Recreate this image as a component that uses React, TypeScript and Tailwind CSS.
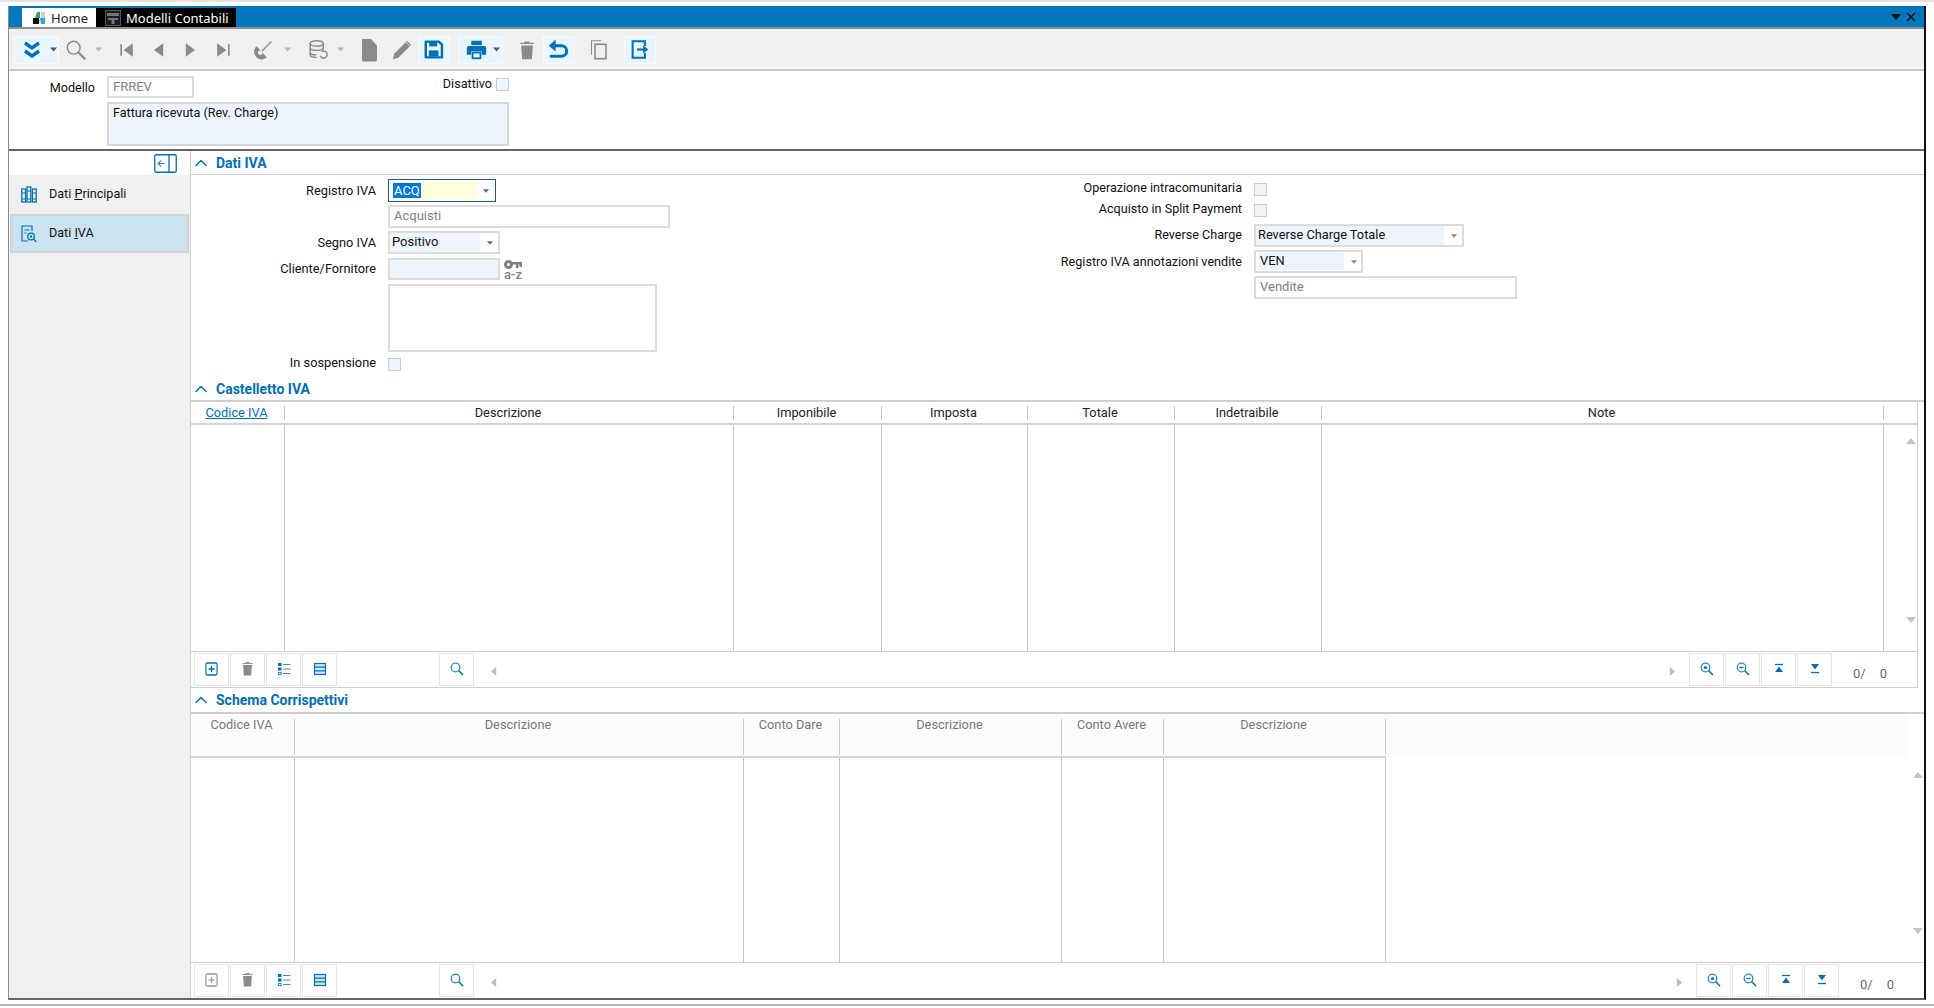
import React from "react";
import { ChevronUp } from "lucide-react";

const BLUE = "#0070b8";

function Tri({ dir = "down", size = 6, color = "#666" }: { dir?: "down" | "up" | "left" | "right"; size?: number; color?: string }) {
  const pts = { down: "0,2 10,2 5,8", up: "0,8 10,8 5,2", left: "8,0 8,10 2,5", right: "2,0 2,10 8,5" }[dir];
  return (
    <svg width={size} height={size} viewBox="0 0 10 10" className="block shrink-0">
      <polygon points={pts} fill={color} />
    </svg>
  );
}

const G = "#8a8a8a";

function Ico({ children, w = 24, vb = "0 0 24 24" }: { children: React.ReactNode; w?: number; vb?: string }) {
  return (
    <svg width={w} height={w} viewBox={vb} className="block shrink-0">
      {children}
    </svg>
  );
}

const Icons = {
  chevrons: () => (
    <Ico>
      <path d="M5 5l7 5 7-5M5 13l7 5 7-5" fill="none" stroke={BLUE} strokeWidth="3.4" />
    </Ico>
  ),
  search: ({ c = G }: { c?: string }) => (
    <Ico w={22}>
      <circle cx="9.500" cy="9.500" r="7" fill="none" stroke={c} strokeWidth="1.6" />
      <path d="M14.500 14.500L22 22" stroke={c} strokeWidth="2.4" />
    </Ico>
  ),
  first: () => (
    <Ico w={20}>
      <path d="M5 5v14" stroke={G} strokeWidth="2" />
      <polygon points="19,4 19,20 8,12" fill={G} />
    </Ico>
  ),
  prev: () => (
    <Ico w={20}>
      <polygon points="17,4 17,20 6,12" fill={G} />
    </Ico>
  ),
  next: () => (
    <Ico w={20}>
      <polygon points="7,4 7,20 18,12" fill={G} />
    </Ico>
  ),
  last: () => (
    <Ico w={20}>
      <path d="M19 5v14" stroke={G} strokeWidth="2" />
      <polygon points="5,4 5,20 16,12" fill={G} />
    </Ico>
  ),
  sat: () => (
    <Ico w={22}>
      <path d="M5 8c-4 4-3 9 0 12s8 3 11 0z" fill={G} />
      <circle cx="9" cy="15" r="2.500" fill="#f0f0f0" />
      <path d="M11 13l5-5M18 6l3-3" stroke={G} strokeWidth="1.500" />
      <circle cx="17" cy="7" r="1.100" fill={G} />
    </Ico>
  ),
  db: () => (
    <Ico w={21}>
      <ellipse cx="10" cy="5" rx="7.500" ry="3" fill="none" stroke={G} strokeWidth="1.700" />
      <path d="M2.500 5v13c0 2 4 3 7.500 3M17.500 5v7M2.500 10c0 2 4 3 7.500 3s7.500-1 7.500-3M2.500 15c0 2 4 3 7 3" fill="none" stroke={G} strokeWidth="1.700" />
      <path d="M14 19a4 4 0 1 0 1.500-4.500" fill="none" stroke={G} strokeWidth="1.700" />
    </Ico>
  ),
  doc: () => (
    <Ico>
      <path d="M5 1h9l6 6.500V22a1.500 1.500 0 0 1-1.500 1.500h-12A1.500 1.500 0 0 1 5 22z" fill={G} />
    </Ico>
  ),
  pencil: () => (
    <Ico w={22}>
      <path d="M2 22l1.500-6L16 3.500l4.500 4.500L8 20.500z" fill={G} />
      <path d="M17.500 2l4.500 4.500-1 1L16.500 3z" fill={G} />
    </Ico>
  ),
  save: () => (
    <Ico w={21} vb="1 0 24 24">
      <path d="M3 3h15l3.500 3.500V21H3z" fill="none" stroke={BLUE} strokeWidth="2.800" strokeLinejoin="round" />
      <rect x="7" y="3" width="9" height="5.500" fill={BLUE} />
      <rect x="6.500" y="13" width="11" height="7" fill={BLUE} />
    </Ico>
  ),
  print: () => (
    <Ico w={21}>
      <rect x="6" y="2" width="12" height="5" fill={BLUE} />
      <path d="M3 8h18a2 2 0 0 1 2 2v8h-5v-4H6v4H1v-8a2 2 0 0 1 2-2z" fill={BLUE} />
      <rect x="7.500" y="15.500" width="9" height="6.500" fill="none" stroke={BLUE} strokeWidth="2" />
    </Ico>
  ),
  trash: ({ s = 20 }: { s?: number }) => (
    <Ico w={s}>
      <path d="M5 6.500h14L17.800 23H6.200z" fill={G} />
      <path d="M4 4h16M9 2.500h6" stroke={G} strokeWidth="1.500" />
    </Ico>
  ),
  undo: () => (
    <Ico w={23} vb="1 0 24 24">
      <path d="M3 8h12a5.500 5.500 0 0 1 0 11H3" fill="none" stroke={BLUE} strokeWidth="3.200" />
      <polygon points="9,1.500 9,14 2,8" fill={BLUE} />
    </Ico>
  ),
  copy: () => (
    <Ico w={21}>
      <path d="M4 18V2h11" fill="none" stroke={G} strokeWidth="1.200" />
      <rect x="8" y="6" width="12.500" height="16.500" fill="none" stroke={G} strokeWidth="1.800" />
    </Ico>
  ),
  exit: () => (
    <Ico w={21} vb="2 0 24 24">
      <path d="M19 8V2.500H5v19h14V16" fill="none" stroke={BLUE} strokeWidth="2.400" />
      <path d="M10 12h8" stroke={BLUE} strokeWidth="2.400" />
      <polygon points="17,7.500 23,12 17,16.500" fill={BLUE} />
    </Ico>
  ),
  key: () => (
    <svg width="18" height="10" viewBox="0 0 18 10" className="block shrink-0">
      <circle cx="4.500" cy="4.500" r="3" fill="none" stroke="#808080" strokeWidth="3" />
      <path d="M8 3.200h10M13.200 3v5M16.800 3v4" fill="none" stroke="#808080" strokeWidth="2.600" />
    </svg>
  ),
  plusBox: ({ c = BLUE }: { c?: string }) => (
    <svg width="13" height="14" viewBox="0 0 14 14" className="block" preserveAspectRatio="none">
      <rect x="1" y="1" width="12" height="12" rx="1.500" fill="none" stroke={c} strokeWidth="1.300" />
      <path d="M7 3.800v6.400M3.800 7h6.400" stroke={c === BLUE ? BLUE : "#aaa"} strokeWidth="1.500" />
    </svg>
  ),
  list: () => (
    <svg width="14" height="14" viewBox="0 0 14 14" className="block">
      <rect x="1" y="1" width="3.500" height="3" fill={BLUE} />
      <rect x="1" y="5.500" width="3.500" height="3" fill={BLUE} />
      <rect x="1.300" y="10.300" width="2.800" height="2.400" fill="none" stroke={BLUE} strokeWidth="0.800" />
      <path d="M6 2.500h7.500M6 7h7.500M6 11.500h7.500" stroke="#3b8fc7" strokeWidth="1.200" />
    </svg>
  ),
  rows: () => (
    <svg width="14" height="14" viewBox="0 0 14 14" className="block">
      <rect x="1.500" y="1.500" width="11" height="11" fill="#cfe4f3" stroke={BLUE} strokeWidth="1.200" />
      <path d="M1.500 5.200h11M1.500 8.800h11" stroke={BLUE} strokeWidth="1.200" />
    </svg>
  ),
  searchSm: () => (
    <svg width="14" height="14" viewBox="0 0 14 14" className="block">
      <circle cx="5.500" cy="5.500" r="4.300" fill="none" stroke="#2b88c8" strokeWidth="1.300" />
      <path d="M8.800 8.800L13 13" stroke={BLUE} strokeWidth="1.600" />
    </svg>
  ),
  zoomIn: () => (
    <svg width="14" height="14" viewBox="0 0 14 14" className="block">
      <circle cx="5.500" cy="5.500" r="4.300" fill="none" stroke="#2b88c8" strokeWidth="1.300" />
      <circle cx="5.500" cy="5.500" r="1.600" fill={BLUE} />
      <path d="M8.800 8.800L13 13" stroke={BLUE} strokeWidth="1.600" />
    </svg>
  ),
  zoomOut: () => (
    <svg width="14" height="14" viewBox="0 0 14 14" className="block">
      <circle cx="5.500" cy="5.500" r="4.300" fill="none" stroke="#2b88c8" strokeWidth="1.300" />
      <path d="M3.500 5.500h4" stroke={BLUE} strokeWidth="1.300" />
      <path d="M8.800 8.800L13 13" stroke={BLUE} strokeWidth="1.600" />
    </svg>
  ),
  top: () => (
    <svg width="14" height="14" viewBox="0 0 14 14" className="block">
      <path d="M3 2.500h8" stroke={BLUE} strokeWidth="1.300" />
      <polygon points="7,4.500 11,10 3,10" fill={BLUE} />
    </svg>
  ),
  bottom: () => (
    <svg width="14" height="14" viewBox="0 0 14 14" className="block">
      <polygon points="3,2 11,2 7,7.500" fill={BLUE} />
      <path d="M3 10.500h8" stroke={BLUE} strokeWidth="1.300" />
    </svg>
  ),
};

function Slot({ className = "", children }: { className?: string; children: React.ReactNode }) {
  return <div className={`flex items-center justify-center shrink-0 ${className}`}>{children}</div>;
}

function ActiveBtn({ className = "", children }: { className?: string; children: React.ReactNode }) {
  return <div className={`flex items-center justify-center shrink-0 h-[28px] bg-[#eaf6fd] border border-[#f7fbfe] ${className}`}>{children}</div>;
}

function MainToolbar() {
  return (
    <div className="h-[42px] bg-[#f0f0f0] border-t-2 border-[#8f8f8f] border-b-2 border-b-[#f8f8f8] flex items-center pl-[5px] pt-[3px] shrink-0">
      <ActiveBtn className="w-[45px] gap-[6px] pl-[4px]">
        <Icons.chevrons />
        <Tri color="#555" size={7} />
      </ActiveBtn>
      <Slot className="w-[24px] ml-[5px]"><Icons.search /></Slot>
      <Slot className="w-[12px] ml-[4px]"><Tri color="#b5b5b5" size={7} /></Slot>
      <Slot className="w-[24px] ml-[11px]"><Icons.first /></Slot>
      <Slot className="w-[24px] ml-[8px]"><Icons.prev /></Slot>
      <Slot className="w-[24px] ml-[7px]"><Icons.next /></Slot>
      <Slot className="w-[24px] ml-[9px]"><Icons.last /></Slot>
      <Slot className="w-[24px] ml-[16px]"><Icons.sat /></Slot>
      <Slot className="w-[12px] ml-[6px]"><Tri color="#b5b5b5" size={7} /></Slot>
      <Slot className="w-[24px] ml-[13px]"><Icons.db /></Slot>
      <Slot className="w-[12px] ml-[4px]"><Tri color="#b5b5b5" size={7} /></Slot>
      <Slot className="w-[24px] ml-[11px]"><Icons.doc /></Slot>
      <Slot className="w-[24px] ml-[9px]"><Icons.pencil /></Slot>
      <ActiveBtn className="w-[32px] ml-[4px]"><Icons.save /></ActiveBtn>
      <ActiveBtn className="w-[45px] ml-[8px] gap-[6px] pl-[4px]">
        <Icons.print />
        <Tri color="#555" size={7} />
      </ActiveBtn>
      <Slot className="w-[24px] ml-[12px]"><Icons.trash /></Slot>
      <ActiveBtn className="w-[32px] ml-[4px]"><Icons.undo /></ActiveBtn>
      <Slot className="w-[24px] ml-[11px]"><Icons.copy /></Slot>
      <ActiveBtn className="w-[32px] ml-[14px]"><Icons.exit /></ActiveBtn>
    </div>
  );
}

function Check({ className = "" }: { className?: string }) {
  return <div className={`w-[13px] h-[13px] bg-[#edf4fc] border border-[#cdcdcd] shrink-0 ${className}`} />;
}

function Field({ className = "", children }: { className?: string; children?: React.ReactNode }) {
  return <div className={`border-2 border-[#dcdcdc] bg-white text-[#808080] text-[13px] leading-[18px] pl-[4px] pb-[1px] shrink-0 flex items-center ${className}`}>{children}</div>;
}

function SectionHeader({ title, className = "" }: { title: string; className?: string }) {
  return (
    <div className={`flex items-center shrink-0 ${className}`}>
      <ChevronUp size={20} color={BLUE} strokeWidth={1.7} />
      <span className="ml-[5px] text-[14px] font-bold text-[#0070b8] leading-none">{title}</span>
    </div>
  );
}

function TBtn({ className = "", children }: { className?: string; children: React.ReactNode }) {
  return <div className={`w-[35px] h-[33px] border border-[#e6e6e6] flex items-center justify-center shrink-0 pb-[2px] ${className}`}>{children}</div>;
}

function GridToolbar({ grey = false }: { grey?: boolean }) {
  return (
    <div className="h-[35px] flex items-center pl-[3px] shrink-0">
      <TBtn><Icons.plusBox c={grey ? "#999" : BLUE} /></TBtn>
      <TBtn className="ml-[1px]"><Icons.trash s={15} /></TBtn>
      <TBtn className="ml-[1px]"><Icons.list /></TBtn>
      <TBtn className="ml-[1px]"><Icons.rows /></TBtn>
      <TBtn className="ml-[102px]"><Icons.searchSm /></TBtn>
      <div className="ml-[15px] mt-[3px]"><Tri dir="left" size={9} color="#bdbdbd" /></div>
      <div className="ml-auto mt-[3px] mr-[12px]"><Tri dir="right" size={9} color="#bdbdbd" /></div>
      <TBtn><Icons.zoomIn /></TBtn>
      <TBtn className="ml-[1px]"><Icons.zoomOut /></TBtn>
      <TBtn className="ml-[1px]"><Icons.top /></TBtn>
      <TBtn className="ml-[1px]"><Icons.bottom /></TBtn>
      <div className="w-[85px] pl-[21px] pt-[9px] text-[13px] text-[#5f6b7a] whitespace-nowrap shrink-0">
        0/<span className="ml-[14px]">0</span>
      </div>
    </div>
  );
}

function Scroll({ className = "" }: { className?: string }) {
  return (
    <div className={`flex flex-col justify-between items-end ${className}`}>
      <Tri dir="up" size={10} color="#c4c4c4" />
      <Tri dir="down" size={10} color="#c4c4c4" />
    </div>
  );
}

function Label({ className = "", children }: { className?: string; children: React.ReactNode }) {
  return <div className={`text-right text-[12.6px] leading-[18px] text-[#111] shrink-0 ${className}`}>{children}</div>;
}

function LeftLabel({ className = "", children }: { className?: string; children: React.ReactNode }) {
  return <div className={`w-[185px] text-right text-[12.8px] leading-[18px] text-[#111] shrink-0 ${className}`}>{children}</div>;
}

const topCols = [
  { w: "w-[94px]", t: "Codice IVA" },
  { w: "w-[449px]", t: "Descrizione" },
  { w: "w-[148px]", t: "Imponibile" },
  { w: "w-[146px]", t: "Imposta" },
  { w: "w-[147px]", t: "Totale" },
  { w: "w-[147px]", t: "Indetraibile" },
  { w: "w-[562px]", t: "Note" },
];

const botCols = [
  { w: "w-[104px]", t: "Codice IVA" },
  { w: "w-[449px]", t: "Descrizione" },
  { w: "w-[96px]", t: "Conto Dare" },
  { w: "w-[222px]", t: "Descrizione" },
  { w: "w-[102px]", t: "Conto Avere" },
  { w: "w-[222px]", t: "Descrizione" },
];

export default function App() {
  return (
    <div className="w-[1934px] h-[1008px] bg-white overflow-hidden font-['Roboto',sans-serif]">
      <div className="h-[1006px] border-t-2 border-b-2 border-t-[#e2e2e2] border-b-[#b5b5b5] pt-[4px] pl-[8px] pr-[8px]">
        <div className="w-[1918px] h-[994px] border-r-2 border-r-[#111] border-l border-l-[#8a8a8a] border-b-2 border-b-[#666] flex flex-col">
          {/* tab bar */}
          <div className="h-[21px] bg-[#0277bd] flex items-end pl-[13px] shrink-0 font-['Noto_Sans',sans-serif] text-[13px]">
            <div className="h-[19px] w-[74px] bg-white flex items-center pl-[10px] gap-[5px] pt-[1px] text-[#222]">
              <svg width="14" height="14" viewBox="0 0 14 14" className="block shrink-0">
                <polygon points="5,1 8,1 8,7 3,7" fill="#3aa35c" />
                <polygon points="9,1 13,1 13,7 9,7" fill="#c9ced3" />
                <rect x="1" y="7" width="6" height="6" fill="#111" />
                <polygon points="8,7 13,7 13,13 9,13" fill="#2ba6e0" />
              </svg>
              <span className="leading-none">Home</span>
            </div>
            <div className="h-[19px] w-[140px] bg-black flex items-center pl-[9px] gap-[5px] pt-[1px] text-white">
              <svg width="16" height="16" viewBox="0 0 16 16" className="block shrink-0">
                <rect x="0.500" y="0.500" width="15" height="15" fill="#1c1c1c" stroke="#555" />
                <rect x="2" y="3" width="12" height="3" fill="#777" />
                <rect x="3" y="8" width="10" height="2" fill="#777" />
                <rect x="6.500" y="8" width="3" height="6" fill="#777" />
              </svg>
              <span className="leading-none">Modelli Contabili</span>
            </div>
            <div className="ml-auto self-center flex items-center gap-[5px] pr-[8px]">
              <Tri size={10} color="#111" />
              <svg width="10" height="10" viewBox="0 0 10 10" className="block">
                <path d="M1 1l8 8M9 1l-8 8" stroke="#111" strokeWidth="1.500" />
              </svg>
            </div>
          </div>
          <MainToolbar />
          {/* header form */}
          <div className="h-[80px] border-t-2 border-[#c8c8c8] flex shrink-0">
            <Label className="w-[86px] mt-[8px]">Modello</Label>
            <div className="w-[402px] ml-[12px] shrink-0 flex flex-col pt-[5px]">
              <div className="flex items-start justify-between">
                <Field className="w-[87px] h-[22px]">FRREV</Field>
                <div className="flex items-center gap-[4px] mt-[-1px]">
                  <span className="text-[12.6px] leading-[18px] text-[#111]">Disattivo</span>
                  <Check />
                </div>
              </div>
              <div className="w-[402px] h-[44px] mt-[4px] border-2 border-[#d6d6d6] bg-[#edf4fc] text-[12.6px] leading-[18px] text-[#111] pl-[4px]">Fattura ricevuta (Rev. Charge)</div>
            </div>
          </div>
          {/* body */}
          <div className="flex-1 min-h-0 flex border-t-2 border-t-[#666]">
            <div className="w-[181px] shrink-0 flex flex-col">
              <div className="h-[24px] flex items-center justify-end pr-[13px] shrink-0">
                <svg width="23" height="19" viewBox="0 0 23 19" className="block">
                  <rect x="0.750" y="0.750" width="21.500" height="17.500" rx="1.500" fill="none" stroke={BLUE} strokeWidth="1.300" />
                  <path d="M15 1v17" stroke={BLUE} strokeWidth="1.300" />
                  <path d="M11 9.500H4M7 6.500l-3 3 3 3" fill="none" stroke="#3b8fc7" strokeWidth="1.100" />
                </svg>
              </div>
              <div className="flex-1 bg-[#f0f0f0] flex flex-col text-[12.6px] text-[#111]">
                <div className="h-[39px] flex items-center pl-[12px] gap-[12px] shrink-0">
                  <svg width="16" height="17" viewBox="0 0 16 17" className="block">
                    <g fill="none" stroke={BLUE} strokeWidth="1.300">
                      <rect x="0.800" y="3" width="3.800" height="13" />
                      <rect x="6" y="1" width="3.800" height="15" />
                      <rect x="11.400" y="3" width="3.800" height="13" />
                    </g>
                    <path d="M1 7h3M1 13h3M6 5h4M6 13h4M11 7h4M11 13h4" stroke={BLUE} strokeWidth="1.200" />
                  </svg>
                  <span>Dati <span className="underline">P</span>rincipali</span>
                </div>
                <div className="h-[39px] mx-[1px] bg-[#cbe3f1] border-2 border-[#d4d4d4] flex items-center pl-[9px] gap-[12px] shrink-0">
                  <svg width="16" height="18" viewBox="0 0 16 18" className="block">
                    <path d="M11 6V1H1v15h6" fill="none" stroke={BLUE} strokeWidth="1.200" />
                    <path d="M3.500 5h5M3.500 8h2" stroke={BLUE} strokeWidth="1" />
                    <circle cx="10" cy="11.500" r="3.300" fill="none" stroke={BLUE} strokeWidth="1.300" />
                    <circle cx="10" cy="11.500" r="1.200" fill={BLUE} />
                    <path d="M12.500 14l3 3" stroke={BLUE} strokeWidth="1.300" />
                  </svg>
                  <span>Dati <span className="underline">I</span>VA</span>
                </div>
              </div>
            </div>
            <div className="flex-1 min-w-0 flex flex-col border-l border-l-[#cfcfcf]">
              <SectionHeader title="Dati IVA" className="h-[24px] border-b border-[#cfcfcf]" />
              {/* form */}
              <div className="h-[202px] flex shrink-0">
                <div className="w-[809px] shrink-0 flex flex-col pt-[4px]">
                  <div className="flex h-[23px] items-center">
                    <LeftLabel>Registro IVA</LeftLabel>
                    <div className="ml-[12px] w-[108px] h-[23px] border-[1.5px] border-[#1f5a96] flex items-center pl-[4px]">
                      <div className="w-[84px] h-[19px] bg-[#ffffe0] flex items-center">
                        <span className="bg-[#0078d7] text-white text-[13px] leading-[15px] px-[1px]">ACQ</span>
                      </div>
                      <div className="ml-[6px]"><Tri /></div>
                    </div>
                  </div>
                  <div className="flex mt-[3px]">
                    <Field className="ml-[197px] w-[282px] h-[23px]">Acquisti</Field>
                  </div>
                  <div className="flex h-[23px] items-center mt-[3px]">
                    <LeftLabel>Segno IVA</LeftLabel>
                    <div className="ml-[12px] w-[112px] h-[23px] border-2 border-[#dcdcdc] flex items-center">
                      <div className="w-[90px] h-full bg-[#edf4fc] flex items-center pl-[2px] pb-[1px] text-[13px] text-[#111]">Positivo</div>
                      <div className="ml-[7px]"><Tri /></div>
                    </div>
                  </div>
                  <div className="flex h-[22px] items-center mt-[4px]">
                    <LeftLabel>Cliente/Fornitore</LeftLabel>
                    <div className="ml-[12px] w-[112px] h-[22px] border-2 border-[#dcdcdc] bg-[#edf4fc]" />
                    <div className="ml-[3px] flex flex-col items-center w-[20px]">
                      <Icons.key />
                      <span className="text-[13px] leading-[8px] mt-[1px] font-medium text-[#808080]">a-z</span>
                    </div>
                  </div>
                  <Field className="ml-[197px] mt-[4px] w-[269px] h-[68px]" />
                  <div className="flex items-center mt-[6px] h-[12px]">
                    <LeftLabel className="mt-[-2px]">In sospensione</LeftLabel>
                    <Check className="ml-[12px]" />
                  </div>
                </div>
                <div className="flex-1 flex flex-col pt-[8px]">
                  <div className="flex h-[12px] items-center">
                    <Label className="w-[242px] mt-[-3px]">Operazione intracomunitaria</Label>
                    <Check className="ml-[12px]" />
                  </div>
                  <div className="flex h-[12px] items-center mt-[9px]">
                    <Label className="w-[242px] mt-[-2px]">Acquisto in Split Payment</Label>
                    <Check className="ml-[12px]" />
                  </div>
                  <div className="flex h-[23px] items-center mt-[8px]">
                    <Label className="w-[242px] mt-[-1px]">Reverse Charge</Label>
                    <div className="ml-[12px] w-[210px] h-[23px] border-2 border-[#dcdcdc] flex items-center">
                      <div className="w-[188px] h-full bg-[#edf4fc] flex items-center pl-[2px] pb-[1px] text-[12.8px] text-[#111]">Reverse Charge Totale</div>
                      <div className="ml-[7px]"><Tri color="#888" /></div>
                    </div>
                  </div>
                  <div className="flex h-[23px] items-center mt-[3px]">
                    <Label className="w-[242px]">Registro IVA annotazioni vendite</Label>
                    <div className="ml-[12px] w-[109px] h-[23px] border-2 border-[#dcdcdc] flex items-center pl-[2px]">
                      <div className="w-[86px] h-[17px] bg-[#edf4fc] flex items-center pl-[2px] pb-[1px] text-[12.8px] text-[#111]">VEN</div>
                      <div className="ml-[7px]"><Tri color="#888" /></div>
                    </div>
                  </div>
                  <Field className="ml-[254px] mt-[3px] w-[263px] h-[23px]">Vendite</Field>
                </div>
              </div>
              <SectionHeader title="Castelletto IVA" className="h-[25px] border-b-2 border-[#cfcfcf]" />
              {/* top grid */}
              <div className="w-[1727px] h-[286px] border-r border-b border-[#cfcfcf] flex flex-col shrink-0">
                <div className="h-[23px] border-b-2 border-[#d4d4d4] flex items-center shrink-0 text-[12.8px] text-[#222]">
                  {topCols.map((c, i) => (
                    <div key={c.t} className={`${c.w} h-[14px] flex items-center justify-center border-r border-[#c8c8c8] pr-[2px] shrink-0`}>
                      {i === 0 ? <span className="text-[#0070b8] underline">{c.t}</span> : c.t}
                    </div>
                  ))}
                </div>
                <div className="h-[227px] border-b border-[#cfcfcf] flex shrink-0">
                  {topCols.map((c) => (
                    <div key={c.t} className={`${c.w} border-r border-[#c8c8c8] shrink-0`} />
                  ))}
                  <Scroll className="w-[33px] pr-[1px] pt-[11px] pb-[26px]" />
                </div>
                <GridToolbar />
              </div>
              <SectionHeader title="Schema Corrispettivi" className="h-[26px] border-b-2 border-[#cfcfcf]" />
              {/* bottom grid */}
              <div className="h-[44px] flex shrink-0 text-[12.8px] text-[#777] bg-[#fcfcfc] w-[1716px]">
                <div className="h-full flex border-b-2 border-[#d4d4d4] shrink-0 pt-[5px]">
                  {botCols.map((c, i) => (
                    <div key={c.t + i} className={`${c.w} h-[36px] text-center leading-[12px] border-r border-[#c8c8c8] pr-[2px] shrink-0`}>
                      {c.t}
                    </div>
                  ))}
                </div>
              </div>
              <div className="flex-1 min-h-0 flex">
                {botCols.map((c, i) => (
                  <div key={c.t + i} className={`${c.w} border-r border-[#c8c8c8] shrink-0`} />
                ))}
                <div className="flex-1 flex justify-end">
                  <Scroll className="w-[14px] pr-[1px] pt-[12px] pb-[26px]" />
                </div>
              </div>
              <div className="border-t border-[#cfcfcf] shrink-0">
                <GridToolbar grey />
              </div>
            </div>
          </div>
        </div>
      </div>
    </div>
  );
}
